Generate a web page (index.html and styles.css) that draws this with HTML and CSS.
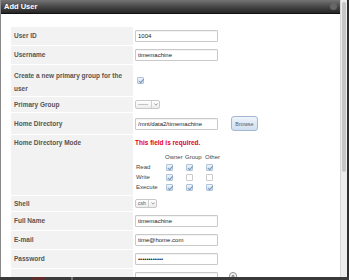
FILE: index.html
```html
<!DOCTYPE html>
<html>
<head>
<meta charset="utf-8">
<link rel="stylesheet" href="styles.css">
</head>
<body>
<div class="screen">
  <div class="window">
    <div class="dialog">
      <div class="titlebar"><span class="title">Add User</span><span class="close"></span></div>
      <div class="content">
        <table class="form">
          <tr><th class="lbl">User ID</th><td class="val"><input class="txt" value="1004"></td></tr>
          <tr><th class="lbl">Username</th><td class="val"><input class="txt" value="timemachine"></td></tr>
          <tr class="r-create"><th class="lbl">Create a new primary group for the user</th><td class="val"><span class="cb on cb-single"></span></td></tr>
          <tr class="r-sel"><th class="lbl">Primary Group</th><td class="val"><span class="sel sel-group"><span class="sel-text">------</span><span class="arr"><svg width="4" height="3" viewBox="0 0 4 3"><path d="M0.5 0.5 L2 2.2 L3.5 0.5" fill="none" stroke="#888" stroke-width="0.8"/></svg></span></span></td></tr>
          <tr class="r-dir"><th class="lbl">Home Directory</th><td class="val"><input class="txt" value="/mnt/data2/timemachine"><span class="btn">Browse</span></td></tr>
          <tr class="r-mode"><th class="lbl">Home Directory Mode</th><td class="val">
            <div class="err">This field is required.</div>
            <table class="perm">
              <tr><td class="pl"></td><td class="pc">Owner</td><td class="pc">Group</td><td class="pc">Other</td></tr>
              <tr><td class="pl">Read</td><td class="pc"><span class="cb on"></span></td><td class="pc"><span class="cb on"></span></td><td class="pc"><span class="cb on"></span></td></tr>
              <tr><td class="pl">Write</td><td class="pc"><span class="cb on"></span></td><td class="pc"><span class="cb off"></span></td><td class="pc"><span class="cb off"></span></td></tr>
              <tr><td class="pl">Execute</td><td class="pc"><span class="cb on"></span></td><td class="pc"><span class="cb on"></span></td><td class="pc"><span class="cb on"></span></td></tr>
            </table>
          </td></tr>
          <tr class="r-sel"><th class="lbl">Shell</th><td class="val"><span class="sel sel-shell"><span class="sel-text">csh</span><span class="arr"><svg width="4" height="3" viewBox="0 0 4 3"><path d="M0.5 0.5 L2 2.2 L3.5 0.5" fill="none" stroke="#888" stroke-width="0.8"/></svg></span></span></td></tr>
          <tr><th class="lbl">Full Name</th><td class="val"><input class="txt" value="timemachine"></td></tr>
          <tr><th class="lbl">E-mail</th><td class="val"><input class="txt" value="time@home.com"></td></tr>
          <tr><th class="lbl">Password</th><td class="val"><input class="txt" type="password" value="timemachine1"></td></tr>
          <tr><th class="lbl"></th><td class="val"><input class="txt" type="password" value=""><svg class="help" width="8" height="8" viewBox="0 0 8 8"><circle cx="4" cy="4" r="3.5" fill="#fff" stroke="#8c8c8c" stroke-width="1"/><circle cx="4" cy="4" r="1.6" fill="#9a9a9a"/></svg></td></tr>
        </table>
      </div>
    </div>
    <div class="scrollbar"><div class="thumb"></div></div>
    <div class="edge"></div>
  </div>
  <div class="ground"><span class="blob"></span><span class="dot"></span></div>
</div>
</body>
</html>
```
FILE: styles.css
```css
* { box-sizing: border-box; }
body {
  margin: 0;
  background: #3a3a3a;
  font-family: "Liberation Sans", Arial, sans-serif;
}
.screen {
  width: 349px;
  height: 280px;
  display: flex;
  flex-direction: column;
  overflow: hidden;
}
.window {
  height: 277px;
  display: flex;
  flex: none;
}
.dialog {
  width: 340px;
  display: flex;
  flex-direction: column;
  background: #fff;
  border-left: 1px solid #8a8a8a;
  overflow: hidden;
}
.titlebar {
  height: 14px;
  flex: none;
  display: flex;
  align-items: center;
  justify-content: space-between;
  padding: 0 3px 0 3px;
  background: linear-gradient(#747474, #444 55%, #262626);
  border-bottom: 1px solid #111;
}
.title {
  color: #fff;
  font-weight: bold;
  font-size: 7.5px;
  line-height: 10px;
}
.close {
  width: 7px;
  height: 7px;
  border-radius: 50%;
  background: #666;
}
.content {
  flex: 1;
  overflow: hidden;
  padding: 12px 0 0 10px;
}
.form {
  border-collapse: separate;
  border-spacing: 0 1px;
  width: 320px;
}
.lbl {
  width: 122px;
  background: #f2f2f2;
  text-align: left;
  font-weight: bold;
  font-size: 6.5px;
  color: #555;
  padding: 0 3px;
  line-height: 12px;
  height: 18px;
  vertical-align: middle;
}
.val {
  padding: 0 0 0 2px;
  height: 18px;
  vertical-align: middle;
  font-size: 6px;
  line-height: 12px;
}
.r-create .lbl, .r-create .val { height: 31px; }
.r-create .lbl { padding-right: 10px; padding-top: 2px; line-height: 13px; }
.r-sel .lbl, .r-sel .val { height: 15px; }
.r-dir .lbl, .r-dir .val { height: 21px; }
.r-mode .lbl, .r-mode .val {
  height: 60px;
  vertical-align: top;
  padding-top: 2px;
}
.txt {
  width: 83px;
  height: 12px;
  margin: 0;
  padding: 0 2px;
  border: 1px solid #c9c9c9;
  border-radius: 1px;
  font: 6px "Liberation Sans", Arial, sans-serif;
  color: #222;
  vertical-align: middle;
  background: #fff;
  box-shadow: inset 0 1px 1px rgba(0,0,0,0.05);
}
.btn {
  display: inline-flex;
  align-items: center;
  justify-content: center;
  width: 27px;
  height: 15px;
  margin-left: 13px;
  border: 1px solid #a3b7d0;
  border-radius: 3px;
  background: linear-gradient(#eef4fb, #cfdff0);
  font-size: 5.5px;
  color: #556070;
  vertical-align: middle;
}
.sel {
  display: inline-flex;
  align-items: stretch;
  height: 9px;
  border: 1px solid #c8c8c8;
  border-radius: 2px;
  background: linear-gradient(#fff, #ececec);
  font-size: 5px;
  line-height: 7px;
  color: #555;
  vertical-align: middle;
}
.sel-group { width: 25px; }
.sel-shell { width: 22px; }
.sel-text { flex: 1; padding-left: 2px; }
.arr {
  width: 8px;
  border-left: 1px solid #d0d0d0;
  display: flex;
  align-items: center;
  justify-content: center;
}
.cb {
  display: inline-block;
  width: 7px;
  height: 7px;
  border: 1px solid #b2c4d8;
  border-radius: 1px;
  background: linear-gradient(#edf3fa, #d3e2f2);
  position: relative;
  vertical-align: middle;
}
.cb.on::after {
  content: "";
  position: absolute;
  left: 1.5px;
  top: 0;
  width: 2px;
  height: 3.5px;
  border: solid #7494b8;
  border-width: 0 1px 1px 0;
  transform: rotate(40deg);
}
.cb.off {
  background: #fff;
  border-color: #cbcbcb;
}
.cb-single { margin-left: 2px; }
.err {
  color: #e2001a;
  font-weight: bold;
  font-size: 6.5px;
  line-height: 12px;
}
.perm {
  border-collapse: collapse;
  margin-top: 3px;
  font-size: 6px;
  color: #444;
}
.pl, .pc {
  padding: 0;
  height: 10px;
  line-height: 10px;
  text-align: left;
  vertical-align: middle;
}
.pl { width: 30px; padding-left: 1px; }
.pc { width: 20px; }
.pc .cb { margin-left: 1px; }
.help {
  display: inline-block;
  margin-left: 11px;
  vertical-align: top;
}
.scrollbar {
  width: 7px;
  background: #ececec;
  border-left: 1px solid #d6d6d6;
  padding: 2px 1px 0 1px;
}
.thumb {
  height: 170px;
  background: #c6c6c6;
  border-radius: 3px;
}
.edge {
  width: 2px;
  background: #2e2e2e;
}
.ground {
  flex: 1;
  display: flex;
  padding-left: 32px;
  background: #3a3a3a;
}
.blob {
  width: 13px;
  background: #5e2c2c;
}
.dot {
  width: 2px;
  margin-left: 26px;
  background: #777;
}
```
